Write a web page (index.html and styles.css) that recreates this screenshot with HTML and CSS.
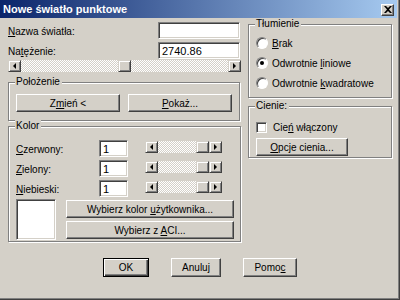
FILE: index.html
```html
<!DOCTYPE html>
<html>
<head>
<meta charset="utf-8">
<link rel="stylesheet" href="styles.css">
</head>
<body>
<div class="win">
  <div class="titlebar">
    <span class="title">Nowe światło punktowe</span>
    <div class="close"><svg width="8" height="7" viewBox="0 0 8 7"><path d="M0 0h2l2 2 2-2h2L5 3.5 8 7H6L4 5 2 7H0l3-3.5z" fill="#000"/></svg></div>
  </div>
  <div class="body">
    <div class="left">
      <div class="field"><span class="lbl"><u>N</u>azwa światła:</span><div class="edit"></div></div>
      <div class="field"><span class="lbl">Na<u>t</u>ężenie:</span><div class="edit">2740.86</div></div>
      <div class="hscroll wide">
        <div class="arr"><i class="tri-l"></i></div>
        <div class="trough"></div>
        <div class="thumb"></div>
        <div class="trough"></div>
        <div class="arr"><i class="tri-r"></i></div>
      </div>
      <div class="group pos">
        <span class="legend">Położenie</span>
        <div class="btnrow">
          <div class="btn"><span>Z<u>m</u>ień &lt;</span></div>
          <div class="btn"><span><u>P</u>okaż...</span></div>
        </div>
      </div>
      <div class="group kolor">
        <span class="legend">Kolor</span>
        <div class="crow">
          <span class="clbl"><u>C</u>zerwony:</span><div class="edit sm">1</div>
          <div class="hscroll small"><div class="arr"><i class="tri-l"></i></div><div class="trough"></div><div class="thumb"></div><div class="arr"><i class="tri-r"></i></div></div>
        </div>
        <div class="crow">
          <span class="clbl"><u>Z</u>ielony:</span><div class="edit sm">1</div>
          <div class="hscroll small"><div class="arr"><i class="tri-l"></i></div><div class="trough"></div><div class="thumb"></div><div class="arr"><i class="tri-r"></i></div></div>
        </div>
        <div class="crow">
          <span class="clbl"><u>N</u>iebieski:</span><div class="edit sm">1</div>
          <div class="hscroll small"><div class="arr"><i class="tri-l"></i></div><div class="trough"></div><div class="thumb"></div><div class="arr"><i class="tri-r"></i></div></div>
        </div>
        <div class="swrow">
          <div class="swatch"></div>
          <div class="btncol">
            <div class="btn"><span>Wybierz kolor <u>u</u>żytkownika...</span></div>
            <div class="btn"><span>Wybierz z <u>A</u>CI...</span></div>
          </div>
        </div>
      </div>
    </div>
    <div class="right">
      <div class="group tlum">
        <span class="legend">Tłumienie</span>
        <div class="opt"><span class="radio"></span><span><u>B</u>rak</span></div>
        <div class="opt"><span class="radio on"></span><span>Odwrotnie <u>l</u>iniowe</span></div>
        <div class="opt"><span class="radio"></span><span>Odwrotnie <u>k</u>wadratowe</span></div>
      </div>
      <div class="group cien">
        <span class="legend">Cienie:</span>
        <div class="opt"><span class="check"></span><span>Cie<u>ń</u> włączony</span></div>
        <div class="btn opc"><span><u>O</u>pcje cienia...</span></div>
      </div>
    </div>
  </div>
  <div class="footer">
    <div class="btn def"><span>OK</span></div>
    <div class="btn anul"><span>Anuluj</span></div>
    <div class="btn pom"><span>Pomo<u>c</u></span></div>
  </div>
</div>
</body>
</html>
```
FILE: styles.css
```css
* { box-sizing: border-box; }
html, body { margin: 0; padding: 0; }
body { width: 400px; height: 300px; overflow: hidden; background: #d4d0c8; }
.win {
  width: 400px; height: 300px; background: #d4d0c8;
  font-family: "Liberation Sans", Arial, sans-serif; font-size: 10px; color: #000;
  border-right: 1px solid #404040; border-bottom: 1px solid #404040;
  box-shadow: inset -1px -1px 0 #808080;
  display: flex; flex-direction: column;
}
u { text-decoration: underline; text-underline-offset: 1px; }
.titlebar {
  height: 18px; margin-right: 2px;
  background: linear-gradient(90deg, #0a246a, #a6caf0);
  display: flex; align-items: center; justify-content: space-between;
  padding: 0 3px 0 3px;
}
.title { color: #fff; font-weight: bold; font-size: 11px; }
.close {
  width: 13px; height: 12px; background: #d4d0c8;
  border: 1px solid; border-color: #fff #404040 #404040 #fff;
  box-shadow: inset -1px -1px #808080;
  display: flex; align-items: center; justify-content: center;
  margin-top: 1px;
}
.close svg { display: block; }
.body { display: flex; gap: 7px; padding: 4px 0 0 8px; }
.left { width: 233px; display: flex; flex-direction: column; }
.right { width: 144px; display: flex; flex-direction: column; margin-top: 2px; }
.field { display: flex; align-items: center; justify-content: space-between; height: 17px; margin-bottom: 3px; padding-right: 1px; }
.lbl { padding-top: 1px; }
.edit {
  width: 82px; height: 17px; background: #fff;
  border: 1px solid; border-color: #808080 #fff #fff #808080;
  box-shadow: inset 1px 1px #404040, inset -1px -1px #d4d0c8;
  padding: 2px 3px; font-size: 11px; line-height: 13px;
}
.edit.sm { width: 29px; }
.hscroll { display: flex; height: 12px; }
.hscroll.wide { width: 233px; margin-top: -2px; }
.hscroll .trough {
  flex: 1;
  background: repeating-conic-gradient(#fff 0 25%, #d4d0c8 0 50%) 0 0 / 2px 2px;
}
.arr, .thumb {
  width: 13px; height: 12px; background: #d4d0c8;
  border: 1px solid; border-color: #d4d0c8 #404040 #404040 #d4d0c8;
  box-shadow: inset 1px 1px #fff, inset -1px -1px #808080;
  display: flex; align-items: center; justify-content: center;
}
.tri-l, .tri-r { width: 0; height: 0; border-top: 3px solid transparent; border-bottom: 3px solid transparent; }
.tri-l { border-right: 3px solid #000; margin-right: 1px; }
.tri-r { border-left: 3px solid #000; }
.hscroll.wide .trough:first-of-type { flex: 0 0 98px; }
.group {
  position: relative;
  border: 1px solid #808080;
  box-shadow: inset 1px 1px 0 #fff, 1px 1px 0 #fff;
}
.legend {
  position: absolute; top: -7px; left: 6px; padding: 0 2px 0 1px;
  background: #d4d0c8; line-height: 12px;
}
.group.pos { margin-top: 10px; height: 39px; width: 232px; padding: 11px 7px 0 7px; }
.btnrow { display: flex; gap: 8px; }
.btn {
  height: 18px; background: #d4d0c8;
  border: 1px solid; border-color: #fff #404040 #404040 #fff;
  box-shadow: inset -1px -1px #808080;
  display: flex; align-items: center; justify-content: center;
  white-space: nowrap;
}
.btnrow .btn { width: 104px; }
.group.kolor { margin-top: 5px; height: 116px; width: 233px; padding: 13px 0 0 7px; }
.crow { display: flex; align-items: center; height: 17px; margin-bottom: 3px; }
.clbl { width: 83px; padding-top: 2px; }
.hscroll.small { width: 77px; margin-left: 17px; margin-top: -4px; }
.swrow { display: flex; gap: 10px; margin-top: -1px; }
.swatch {
  width: 40px; height: 41px; background: #fff;
  border: 1px solid; border-color: #808080 #fff #fff #808080;
  box-shadow: inset 1px 1px #404040, inset -1px -1px #d4d0c8;
}
.btncol { display: flex; flex-direction: column; gap: 3px; padding-top: 1px; }
.btncol .btn { width: 168px; }
.group.tlum { height: 74px; padding: 12px 0 0 7px; }
.opt { display: flex; align-items: center; gap: 4px; height: 12px; margin-bottom: 8px; }
.radio {
  width: 12px; height: 12px; border-radius: 50%; background: #fff;
  border: 1px solid; border-color: #808080 #fff #fff #808080;
  box-shadow: inset 1px 1px 0 #404040;
  display: flex; align-items: center; justify-content: center;
}
.radio.on::after { content: ""; width: 4px; height: 4px; border-radius: 50%; background: #000; }
.group.cien { margin-top: 8px; height: 52px; padding: 14px 0 0 7px; }
.check {
  width: 11px; height: 11px; background: #fff;
  border: 1px solid; border-color: #808080 #fff #fff #808080;
  box-shadow: inset 1px 1px #404040, inset -1px -1px #d4d0c8;
  margin-right: 2px;
}
.cien .opt { margin-bottom: 5px; }
.btn.opc { width: 92px; }
.footer { display: flex; padding: 0 0 0 103px; gap: 22px; margin-top: 16px; }
.footer .btn { height: 19px; }
.btn.def { width: 46px; border: 1px solid #000; box-shadow: inset 1px 1px #fff, inset -1px -1px #404040, inset -2px -2px #808080; }
.btn.anul { width: 50px; }
.btn.pom { width: 54px; }
```
